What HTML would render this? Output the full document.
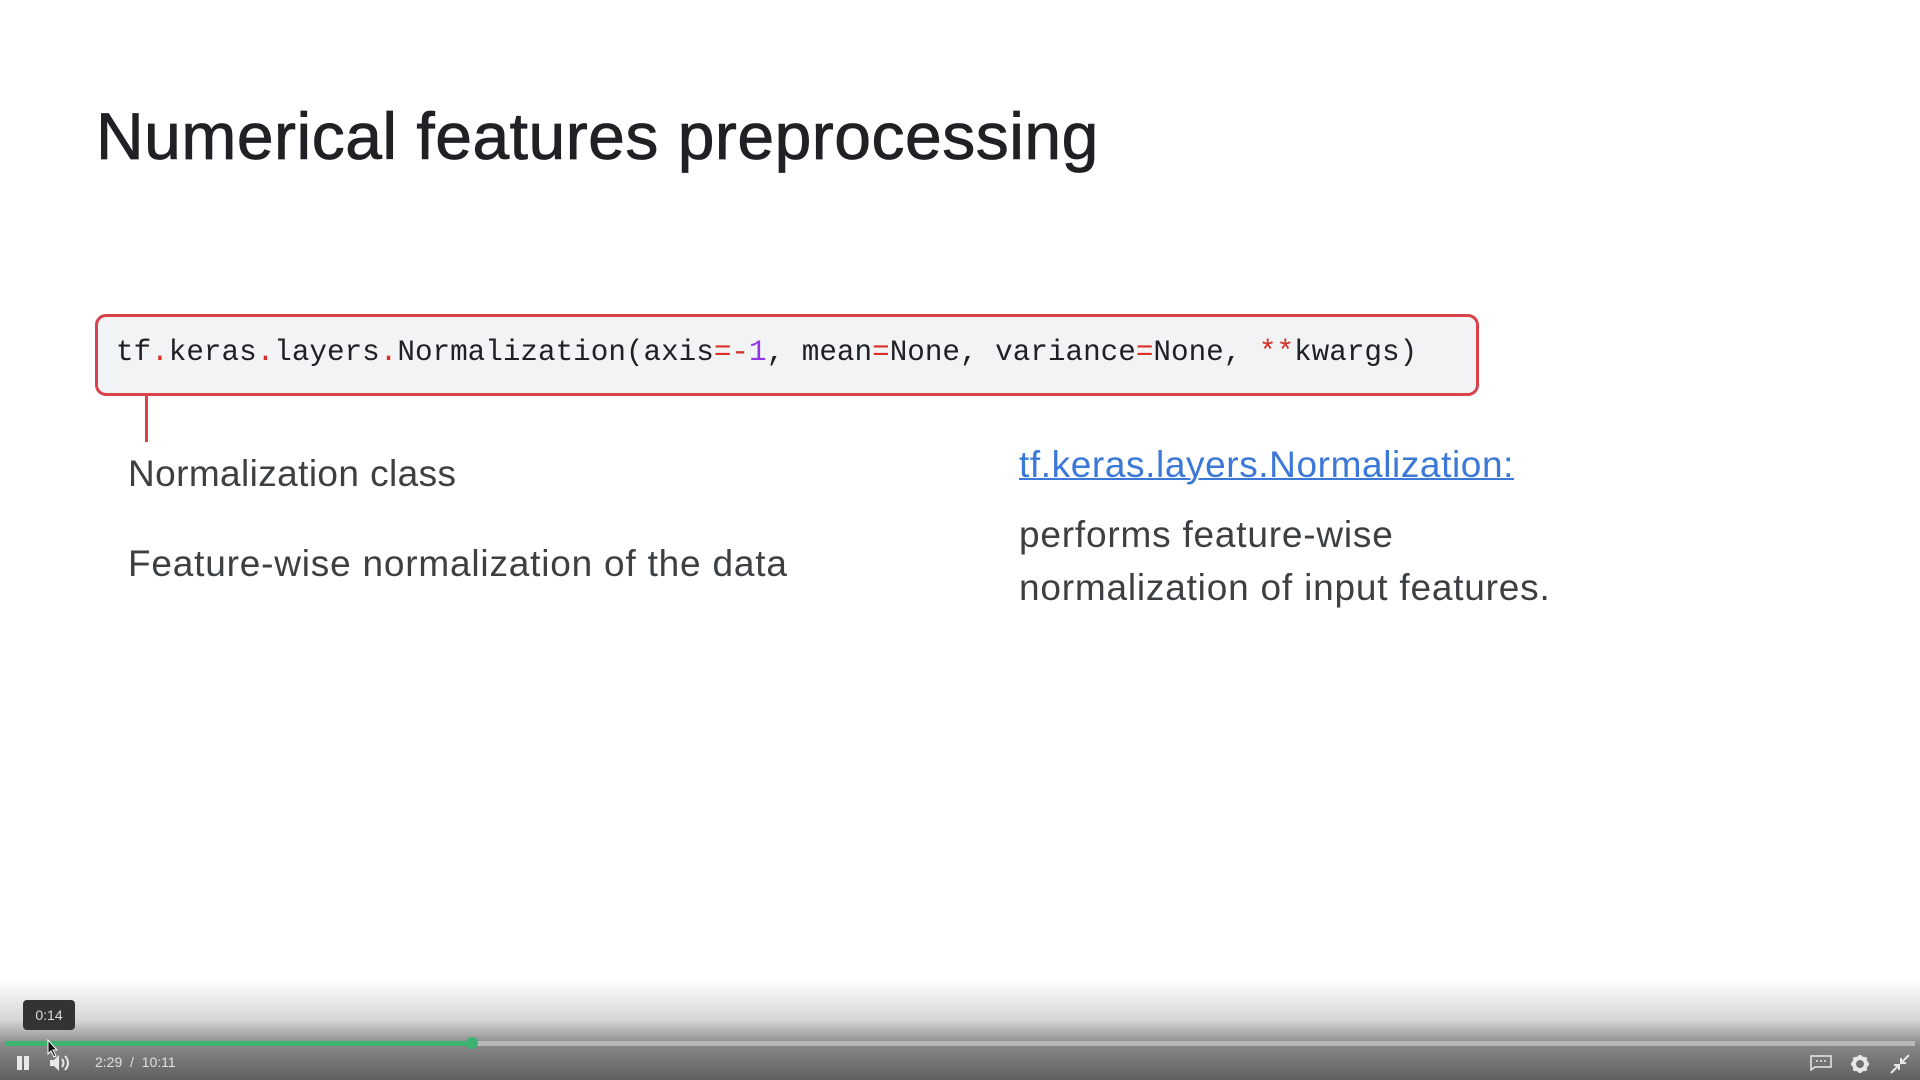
<!DOCTYPE html>
<html><head><meta charset="utf-8"><style>
html,body{margin:0;padding:0;width:1920px;height:1080px;overflow:hidden;background:#fff;font-family:"Liberation Sans",sans-serif;}
.a{position:absolute;white-space:nowrap;}
#title{left:96px;top:98px;font-size:66px;color:#202124;-webkit-text-stroke:0.8px #202124;letter-spacing:0.5px;}
#box{left:95px;top:314px;width:1378px;height:76px;border:3px solid #d9424a;border-radius:11px;background:#f1f3f4;}
#code{left:116px;top:336px;font-family:"Liberation Mono",monospace;font-size:29.3px;color:#202124;}
.r{color:#d93025}.p{color:#9334e6}
#vl{left:145px;top:394px;width:3px;height:48px;background:#d9424a;}
.t{font-size:37px;color:#3c4043;letter-spacing:0.8px;}
#link{left:1019px;top:444px;font-size:37px;letter-spacing:0.6px;color:#3b78d8;text-decoration:underline;text-decoration-thickness:2px;}
#bar{left:0;top:980px;width:1920px;height:100px;background:linear-gradient(#ffffff00 0%,#d5d5d5 40%,#888 65%,#5f5f5f 100%);}
</style></head><body>
<div class="a" id="title">Numerical features preprocessing</div>
<div class="a" id="box"></div>
<div class="a" id="code">tf<span class="r">.</span>keras<span class="r">.</span>layers<span class="r">.</span>Normalization(axis<span class="r">=-</span><span class="p">1</span>, mean<span class="r">=</span>None, variance<span class="r">=</span>None, <span class="r">**</span>kwargs)</div>
<div class="a" id="vl"></div>
<div class="a t" style="left:128px;top:453px;letter-spacing:0.4px">Normalization class</div>
<div class="a t" style="left:128px;top:543px;">Feature-wise normalization of the data</div>
<div class="a" id="link">tf.keras.layers.Normalization:</div>
<div class="a t" style="left:1019px;top:514px;">performs feature-wise</div>
<div class="a t" style="left:1019px;top:567px;">normalization of input features.</div>
<div class="a" id="bar"></div>
<div class="a" style="left:23px;top:1000px;width:52px;height:30px;background:#333;border-radius:4px;color:#ddd;font-size:14px;line-height:30px;text-align:center;">0:14</div>
<div class="a" style="left:5px;top:1041px;width:1910px;height:5px;background:#b8b8b8;"></div>
<div class="a" style="left:5px;top:1041px;width:467px;height:5px;background:#3cb371;"></div>
<div class="a" style="left:466px;top:1037px;width:12px;height:12px;border-radius:50%;background:#3cb371;"></div>
<svg class="a" style="left:46px;top:1038px" width="14" height="20"><path d="M2 2 L2 16 L5 13 L8 19 L10 18 L7 12 L11 12 Z" fill="#111" stroke="#fff" stroke-width="1"/></svg>
<div class="a" style="left:17px;top:1056px;width:5px;height:14px;background:#e8e8e8;"></div>
<div class="a" style="left:24px;top:1056px;width:5px;height:14px;background:#e8e8e8;"></div>
<svg class="a" style="left:49px;top:1054px" width="22" height="18"><path d="M1 6h4l5-5v16l-5-5H1z" fill="#e8e8e8"/><path d="M13 5q3 4 0 8M16 2q6 7 0 14" stroke="#e8e8e8" stroke-width="2" fill="none"/></svg>
<div class="a" style="left:95px;top:1054px;font-size:14px;color:#e0e0e0;">2:29 &nbsp;/ &nbsp;10:11</div>
<svg class="a" style="left:1810px;top:1055px" width="22" height="16"><path d="M1 1h20v11H5l-4 3z" fill="none" stroke="#e8e8e8" stroke-width="1.5"/><path d="M6 6h2M10 6h2M14 6h2" stroke="#e8e8e8" stroke-width="1.5"/></svg>
<svg class="a" style="left:1850px;top:1054px" width="20" height="20" viewBox="0 0 20 20"><circle cx="10" cy="10" r="6" fill="none" stroke="#e8e8e8" stroke-width="4"/><path d="M10 1v4M10 15v4M1 10h4M15 10h4M3.6 3.6l3 3M13.4 13.4l3 3M3.6 16.4l3-3M13.4 6.6l3-3" stroke="#e8e8e8" stroke-width="3"/></svg>
<svg class="a" style="left:1890px;top:1054px" width="20" height="20"><path d="M1 19l7-7M4 11h5v5M19 1l-7 7M11 4v5h5" stroke="#e8e8e8" stroke-width="2" fill="none"/></svg>
</body></html>
